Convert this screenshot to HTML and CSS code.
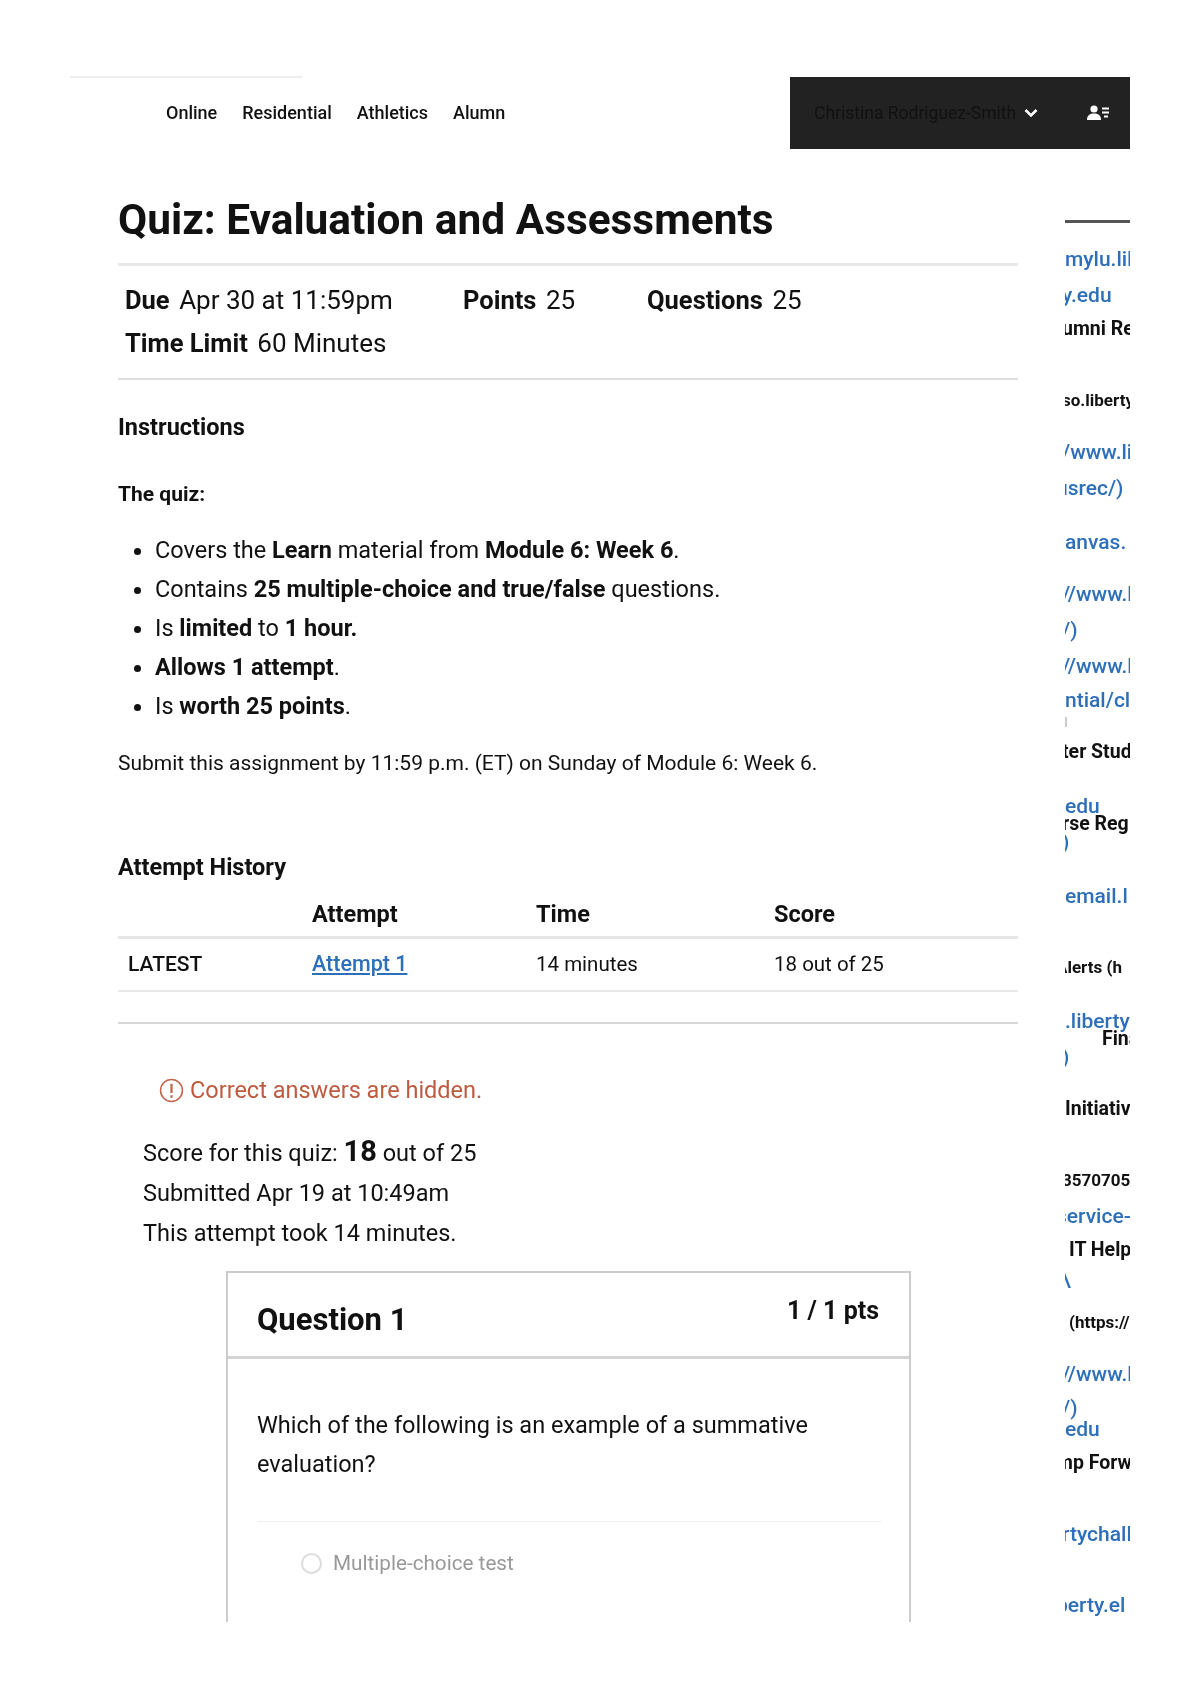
FILE: index.html
```html
<!DOCTYPE HTML>
<html>
<head>
	<meta http-equiv="Content-Type" content="text/html; charset=utf-8">
	<title>Quiz: Evaluation and Assessments</title>
	<link rel="stylesheet" href="styles.css">
</head>
<body>
<div class="page">
	<div class="top">
		<div class="brand"></div>
		<div class="nav">
			<a>Online</a>
			<a>Residential</a>
			<a>Athletics</a>
			<a>Alumn</a>
		</div>
		<div class="userbar">
			<span class="username">Christina Rodriguez-Smith</span>
			<svg class="chevron" viewBox="0 0 14 10" width="14" height="10"><path d="M1.5 2 L7 7.5 L12.500 2" fill="none" stroke="#fff" stroke-width="2.6"/></svg>
			<svg class="usericon" viewBox="0 0 22 16" width="22" height="16"><circle cx="7" cy="4" r="3.600" fill="#fff"/><path d="M0 15 C0 10 3 8.500 7 8.500 C11 8.500 14 10 14 15 Z" fill="#fff"/><path d="M15 3.500 H22 M15 7.500 H22 M17 11.500 H21" stroke="#fff" stroke-width="1.800"/></svg>
		</div>
	</div>

	<div class="columns">
		<div class="main">
			<h1 class="title">Quiz: Evaluation and Assessments</h1>
			<div class="details">
				<div class="detail-row">
					<span class="detail d1"><b>Due</b>Apr 30 at 11:59pm</span>
					<span class="detail d2"><b>Points</b>25</span>
					<span class="detail"><b>Questions</b>25</span>
				</div>
				<div class="detail-row">
					<span class="detail"><b>Time Limit</b>60 Minutes</span>
				</div>
			</div>

			<h2 class="instr-title">Instructions</h2>
			<p class="quiz-label">The quiz:</p>
			<ul class="rules">
				<li>Covers the <b>Learn</b> material from <b>Module 6: Week 6</b>.</li>
				<li>Contains <b>25 multiple-choice and true/false</b> questions.</li>
				<li>Is <b>limited</b> to <b>1 hour.</b></li>
				<li><b>Allows 1 attempt</b>.</li>
				<li>Is <b>worth 25 points</b>.</li>
			</ul>
			<p class="submit-note">Submit this assignment by 11:59 p.m. (ET) on Sunday of Module 6: Week 6.</p>

			<h2 class="history-title">Attempt History</h2>
			<table class="history">
				<tr>
					<th class="c1"></th>
					<th class="c2">Attempt</th>
					<th class="c3">Time</th>
					<th>Score</th>
				</tr>
				<tr>
					<td class="latest">LATEST</td>
					<td><a class="attempt-link">Attempt 1</a></td>
					<td>14 minutes</td>
					<td>18 out of 25</td>
				</tr>
			</table>

			<div class="result">
				<div class="warning">
					<svg viewBox="0 0 24 24" width="25" height="25"><circle cx="12" cy="12" r="10.500" fill="none" stroke="#c2664e" stroke-width="1.500"/><path d="M12 5.500 V14.500 M12 16.500 V19" stroke="#c2664e" stroke-width="2.200"/></svg>
					<span>Correct answers are hidden.</span>
				</div>
				<p class="score-line score-first">Score for this quiz: <b class="score-num">18</b> out of 25</p>
				<p class="score-line">Submitted Apr 19 at 10:49am</p>
				<p class="score-line">This attempt took 14 minutes.</p>
			</div>

			<div class="question">
				<div class="q-head">
					<span class="q-name">Question 1</span>
					<span class="q-pts">1 / 1 pts</span>
				</div>
				<div class="q-body">
					<p class="q-text">Which of the following is an example of a summative evaluation?</p>
					<div class="answer">
						<span class="radio"></span>
						<span class="answer-text">Multiple-choice test</span>
					</div>
				</div>
			</div>
		</div>

		<div class="side">
			<div class="side-rule"></div>
			<div class="sl link first">mylu.liberty</div>
			<div class="sl link s36 cut">y.edu</div>
			<div class="sl s34 cut">umni Ref</div>
			<div class="sl s71 cut small">so.liberty</div>
			<div class="sl link s52 cut">/www.li</div>
			<div class="sl link s36 cut-more">usrec/)</div>
			<div class="sl link s54">anvas.</div>
			<div class="sl link s52 cut">//www.l</div>
			<div class="sl link s36 cut">/)</div>
			<div class="sl link s36 cut">//www.l</div>
			<div class="sl link s34">ntial/cl</div>
			<div class="tick"></div>
			<div class="sl after-tick cut">ter Stud</div>
			<div class="sl link s54">edu</div>
			<div class="sl s18 cut">rse Reg</div>
			<div class="sl link s18 cut">)</div>
			<div class="sl link s54">email.l</div>
			<div class="sl s71 cut-more small">Alerts (h</div>
			<div class="sl link s54">.liberty</div>
			<div class="sl s18 in-far">Fina</div>
			<div class="sl link s18 cut">)</div>
			<div class="sl s52">Initiative</div>
			<div class="sl s71 cut small">3570705</div>
			<div class="sl link s36 cut-more">service-</div>
			<div class="sl s34 in-near">IT Help</div>
			<div class="sl link s30 cut">\</div>
			<div class="sl s42 in-near small">(https://</div>
			<div class="sl link s52 cut">//www.l</div>
			<div class="sl link s34 cut">/)</div>
			<div class="sl link s21">edu</div>
			<div class="sl s34 cut-more">mp Forw</div>
			<div class="sl link s71 cut">rtychall</div>
			<div class="sl link s71 cut-more">berty.el</div>
		</div>
	</div>
</div>
</body>
</html>
```

FILE: styles.css
```css
body{
	margin: 0;
	background-color: #fff;
	color: #111;
	font-family: Roboto, "Liberation Sans", sans-serif;
}
.page{
	height: 1622px;
	overflow: hidden;
	filter: blur(0.6px);
}
.top{
	display: flex;
	align-items: center;
	height: 72px;
	margin: 77px 70px 0 70px;
}
.brand{
	position: relative;
	width: 96px;
	align-self: stretch;
}
.brand:before{
	content: "";
	position: absolute;
	top: -1px;
	left: 0;
	width: 232px;
	border-top: 2px solid #eee;
}
.nav{
	display: flex;
	gap: 25px;
	margin-top: -2px;
	font-size: 18px;
	font-weight: 500;
}
.userbar{
	display: flex;
	align-items: center;
	width: 340px;
	height: 72px;
	box-sizing: border-box;
	margin-left: auto;
	padding: 0 21px 0 24px;
	background-color: #222;
}
.username{
	color: #111;
	font-size: 17.500px;
}
.chevron{
	margin-left: 8px;
}
.usericon{
	margin-left: auto;
}

.columns{
	display: flex;
	margin-left: 118px;
}
.main{
	flex: none;
	width: 900px;
}
.title{
	margin: 44px 0 0;
	padding-bottom: 16px;
	border-bottom: 3px solid #e8e8e8;
	font-size: 42.400px;
	line-height: 54px;
	font-weight: 700;
}
.details{
	padding: 13px 7px 14px;
	border-bottom: 2px solid #ddd;
	font-size: 26px;
	line-height: 42.500px;
}
.detail-row{
	display: flex;
}
.detail b{
	margin-right: 9.500px;
	font-size: 25.500px;
	font-weight: 700;
}
.d1{
	width: 338px;
}
.d2{
	width: 184px;
}
.instr-title{
	margin: 31px 0 0;
	font-size: 23.500px;
	line-height: 32px;
	font-weight: 700;
}
.quiz-label{
	margin: 36px 0 0;
	font-size: 21px;
	line-height: 30px;
	font-weight: 700;
}
.rules{
	margin: 22px 0 0;
	padding: 0 0 0 37px;
	font-size: 23.500px;
	line-height: 39px;
}
.rules b{
	font-weight: 700;
}
.submit-note{
	margin: 21px 0 0;
	font-size: 21px;
	line-height: 32px;
}
.history-title{
	margin: 72px 0 0;
	font-size: 23.500px;
	line-height: 32px;
	font-weight: 700;
}
.history{
	width: 100%;
	margin-top: 8px;
	border-collapse: collapse;
}
.history th{
	height: 45px;
	padding: 0;
	border-bottom: 3px solid #e6e6e6;
	font-size: 23.500px;
	font-weight: 700;
	text-align: left;
}
.history td{
	height: 49px;
	padding: 0 0 2px;
	border-bottom: 2px solid #e8e8e8;
	font-size: 20.500px;
}
.c1{
	width: 194px;
}
.c2{
	width: 224px;
}
.c3{
	width: 238px;
}
.history td.latest{
	padding-left: 10px;
	font-size: 21px;
	font-weight: 500;
}
.attempt-link{
	color: #2d6fb8;
	font-size: 21.500px;
	font-weight: 500;
	text-decoration: underline;
}

.result{
	margin-top: 30px;
	padding: 50px 0 0 25px;
	border-top: 2px solid #d8d8d8;
}
.warning{
	display: flex;
	align-items: center;
	gap: 6px;
	margin-left: 16px;
	color: #bd5a3f;
	font-size: 23.500px;
	line-height: 32px;
}
.score-line{
	margin: 0;
	font-size: 23.500px;
	line-height: 40px;
}
.score-first{
	margin-top: 25px;
}
.score-num{
	font-size: 29px;
	font-weight: 700;
}

.question{
	width: 685px;
	box-sizing: border-box;
	margin: 18px 0 0 108px;
	border: 2px solid #ccc;
	border-bottom: 0;
}
.q-head{
	display: flex;
	justify-content: space-between;
	height: 83px;
	padding: 0 30px 0 29px;
	border-bottom: 3px solid #d4d4d4;
}
.q-name{
	margin-top: 27px;
	font-size: 31px;
	line-height: 40px;
	font-weight: 700;
}
.q-pts{
	margin-top: 21px;
	font-size: 25px;
	line-height: 34px;
	font-weight: 700;
}
.q-body{
	padding: 47px 28px 60px 29px;
}
.q-text{
	margin: 0;
	padding-bottom: 38px;
	border-bottom: 1px solid #eee;
	font-size: 23.500px;
	line-height: 38.500px;
}
.answer{
	display: flex;
	align-items: center;
	gap: 11px;
	margin: 25px 0 0 44px;
}
.radio{
	width: 17px;
	height: 17px;
	border: 2px solid #ddd;
	border-radius: 50%;
}
.answer-text{
	color: #999;
	font-size: 20.700px;
	line-height: 32px;
}

.side{
	flex: none;
	width: 65px;
	margin-left: 47px;
	overflow: hidden;
	white-space: nowrap;
	font-size: 19.500px;
	font-weight: 700;
}
.side-rule{
	height: 3px;
	margin-top: 71px;
	background-color: #555;
}
.sl{
	height: 20px;
	line-height: 20px;
}
.link{
	color: #2d6fb8;
	font-size: 21px;
	font-weight: 500;
}
.small{
	font-size: 17px;
}
.first{
	margin-top: 26px;
}
.tick{
	width: 2px;
	height: 10px;
	margin-top: 7px;
	background-color: #ccc;
}
.after-tick{
	margin-top: 15px;
}
.cut{
	margin-left: -3px;
}
.cut-more{
	margin-left: -9px;
}
.in-near{
	margin-left: 4px;
}
.in-far{
	margin-left: 37px;
}
.s18{
	margin-top: -2px;
}
.s21{
	margin-top: 1px;
}
.s30{
	margin-top: 10px;
}
.s34{
	margin-top: 14px;
}
.s36{
	margin-top: 16px;
}
.s42{
	margin-top: 22px;
}
.s52{
	margin-top: 32px;
}
.s54{
	margin-top: 34px;
}
.s71{
	margin-top: 51px;
}
```
